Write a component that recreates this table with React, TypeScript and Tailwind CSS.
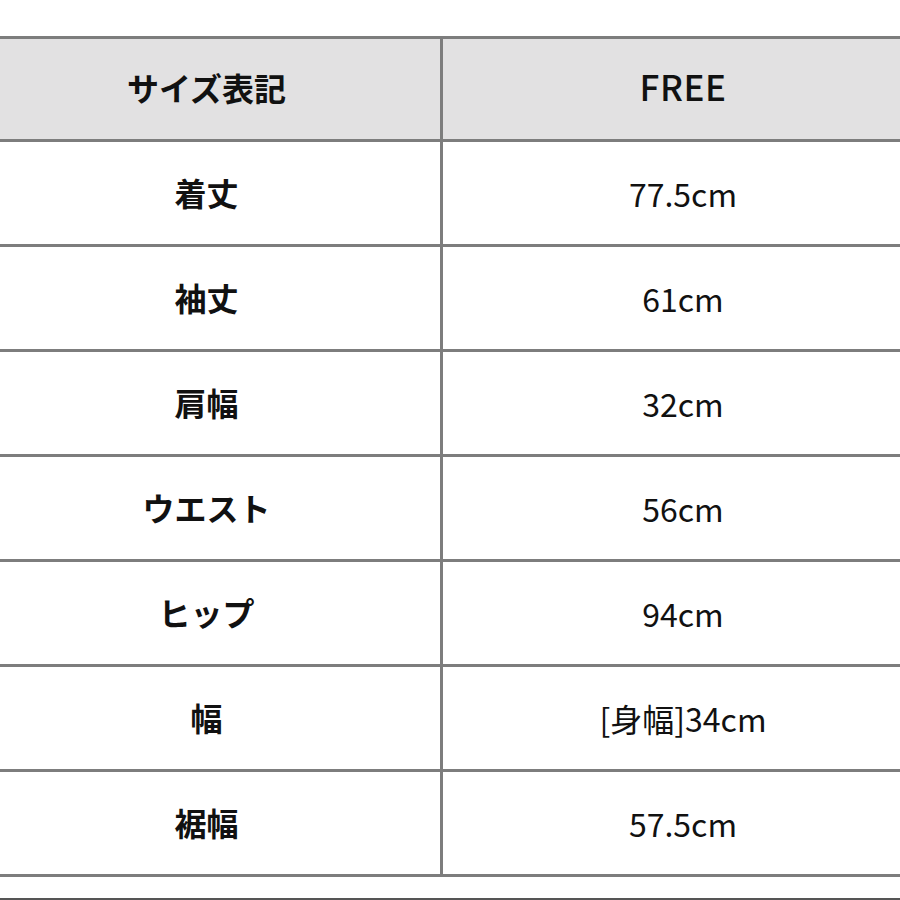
const rows = [
  { label: "着丈", value: "77.5cm" },
  { label: "袖丈", value: "61cm" },
  { label: "肩幅", value: "32cm" },
  { label: "ウエスト", value: "56cm" },
  { label: "ヒップ", value: "94cm" },
  { label: "幅", value: "[身幅]34cm" },
  { label: "裾幅", value: "57.5cm" },
];

export default function App() {
  return (
    <div
      className="w-[900px] h-[900px] overflow-hidden bg-white pt-[36px] text-[#111]"
      style={{ fontFamily: '"Noto Sans CJK JP", "Noto Sans", sans-serif' }}
    >
      <div className="ml-[-27px] w-[950px] border-t-[3px] border-[#7d7d7d]">
        {/* Header */}
        <div className="flex h-[103px] border-b-[3px] border-[#7d7d7d] bg-[#e2e1e2]">
          <div className="w-[470px] flex items-center justify-center pb-[5px] border-r-[3px] border-[#7d7d7d] text-[32px] font-bold">
            サイズ表記
          </div>
          <div className="flex-1 flex items-center justify-center pb-[5px] text-[35px] font-medium tracking-[0.5px]">
            FREE
          </div>
        </div>

        {rows.map((r) => (
          <div
            key={r.label}
            className="flex h-[105px] border-b-[3px] border-[#7d7d7d]"
          >
            <div className="w-[470px] flex items-center justify-center pb-[2px] border-r-[3px] border-[#7d7d7d] text-[32px] font-bold">
              {r.label}
            </div>
            <div className="flex-1 flex items-center justify-center text-[32px]">
              {r.value}
            </div>
          </div>
        ))}
      </div>
      <div className="mt-[21px] h-[3px] bg-[#555]" />
    </div>
  );
}
